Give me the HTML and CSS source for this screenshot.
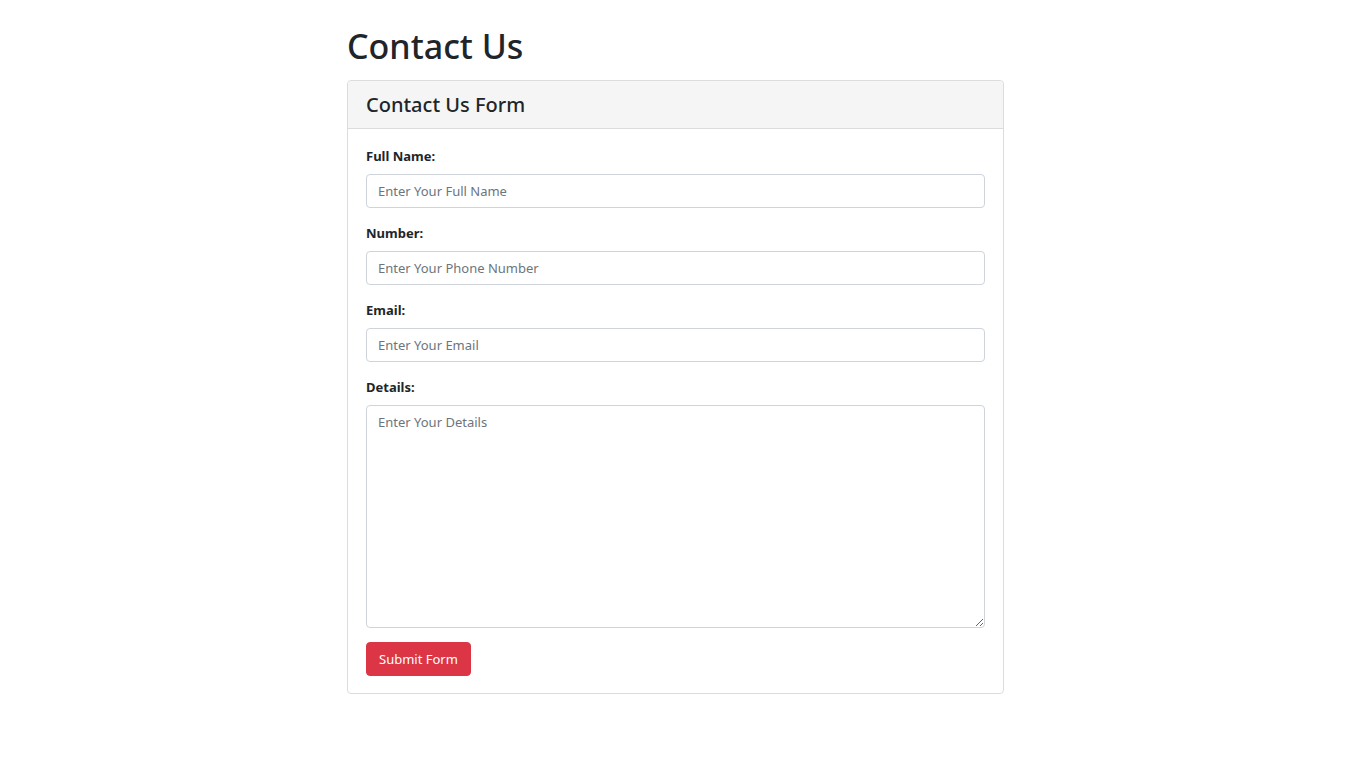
FILE: index.html
```html
<!DOCTYPE html>
<html lang="en">
<head>
<meta charset="utf-8">
<title>Contact Us</title>
<link rel="stylesheet" href="styles.css">
</head>
<body>
<main class="page">
  <h1 class="title">Contact Us</h1>
  <section class="card">
    <header class="card-header">
      <h2 class="card-title">Contact Us Form</h2>
    </header>
    <form class="card-body">
      <div class="field">
        <label class="label" for="name">Full Name:</label>
        <input class="control" id="name" type="text" placeholder="Enter Your Full Name">
      </div>
      <div class="field">
        <label class="label" for="number">Number:</label>
        <input class="control" id="number" type="text" placeholder="Enter Your Phone Number">
      </div>
      <div class="field">
        <label class="label" for="email">Email:</label>
        <input class="control" id="email" type="email" placeholder="Enter Your Email">
      </div>
      <div class="field">
        <label class="label" for="details">Details:</label>
        <textarea class="control area" id="details" placeholder="Enter Your Details"></textarea>
      </div>
      <div class="actions">
        <button class="btn" type="button">Submit Form</button>
      </div>
    </form>
  </section>
</main>
</body>
</html>
```

FILE: styles.css
```css
* { box-sizing: border-box; }
html, body { margin: 0; padding: 0; background: #fff; }
body {
  font-family: "Noto Sans", "Open Sans", sans-serif;
  font-size: 14px;
  color: #212529;
}
.page {
  width: 657px;
  margin-left: 347px;
  padding-top: 26px;
}
.title {
  font-size: 34px;
  font-weight: 500;
  line-height: 41px;
  margin: 0 0 13px 0;
  color: #212529;
}
.card {
  border: 1px solid #dcdcdc;
  border-radius: 4px;
  background: #fff;
}
.card-header {
  background: #f5f5f5;
  border-bottom: 1px solid #dcdcdc;
  height: 48px;
  padding: 0 18px;
  display: flex;
  align-items: center;
  border-radius: 4px 4px 0 0;
}
.card-title {
  margin: 0;
  font-size: 20px;
  font-weight: 500;
  line-height: 1.2;
}
.card-body {
  padding: 17px 18px 17px 18px;
  display: flex;
  flex-direction: column;
}
.field {
  display: flex;
  flex-direction: column;
  margin-bottom: 15px;
}
.label {
  font-weight: 700;
  font-size: 13px;
  line-height: 21px;
  margin-bottom: 7px;
}
.control {
  height: 34px;
  border: 1px solid #ced4da;
  border-radius: 4px;
  padding: 6px 11px;
  font-family: inherit;
  font-size: 13px;
  color: #212529;
  outline: none;
}
.control::placeholder { color: #6c757d; }
.area {
  height: 223px;
  resize: vertical;
  padding-top: 7px;
}
.actions {
  display: flex;
  margin-top: -1px;
}
.btn {
  background: #dc3545;
  color: #fff;
  border: 1px solid #dc3545;
  border-radius: 4px;
  font-family: inherit;
  font-size: 13px;
  height: 34px;
  padding: 0 12px;
  cursor: pointer;
}
```
